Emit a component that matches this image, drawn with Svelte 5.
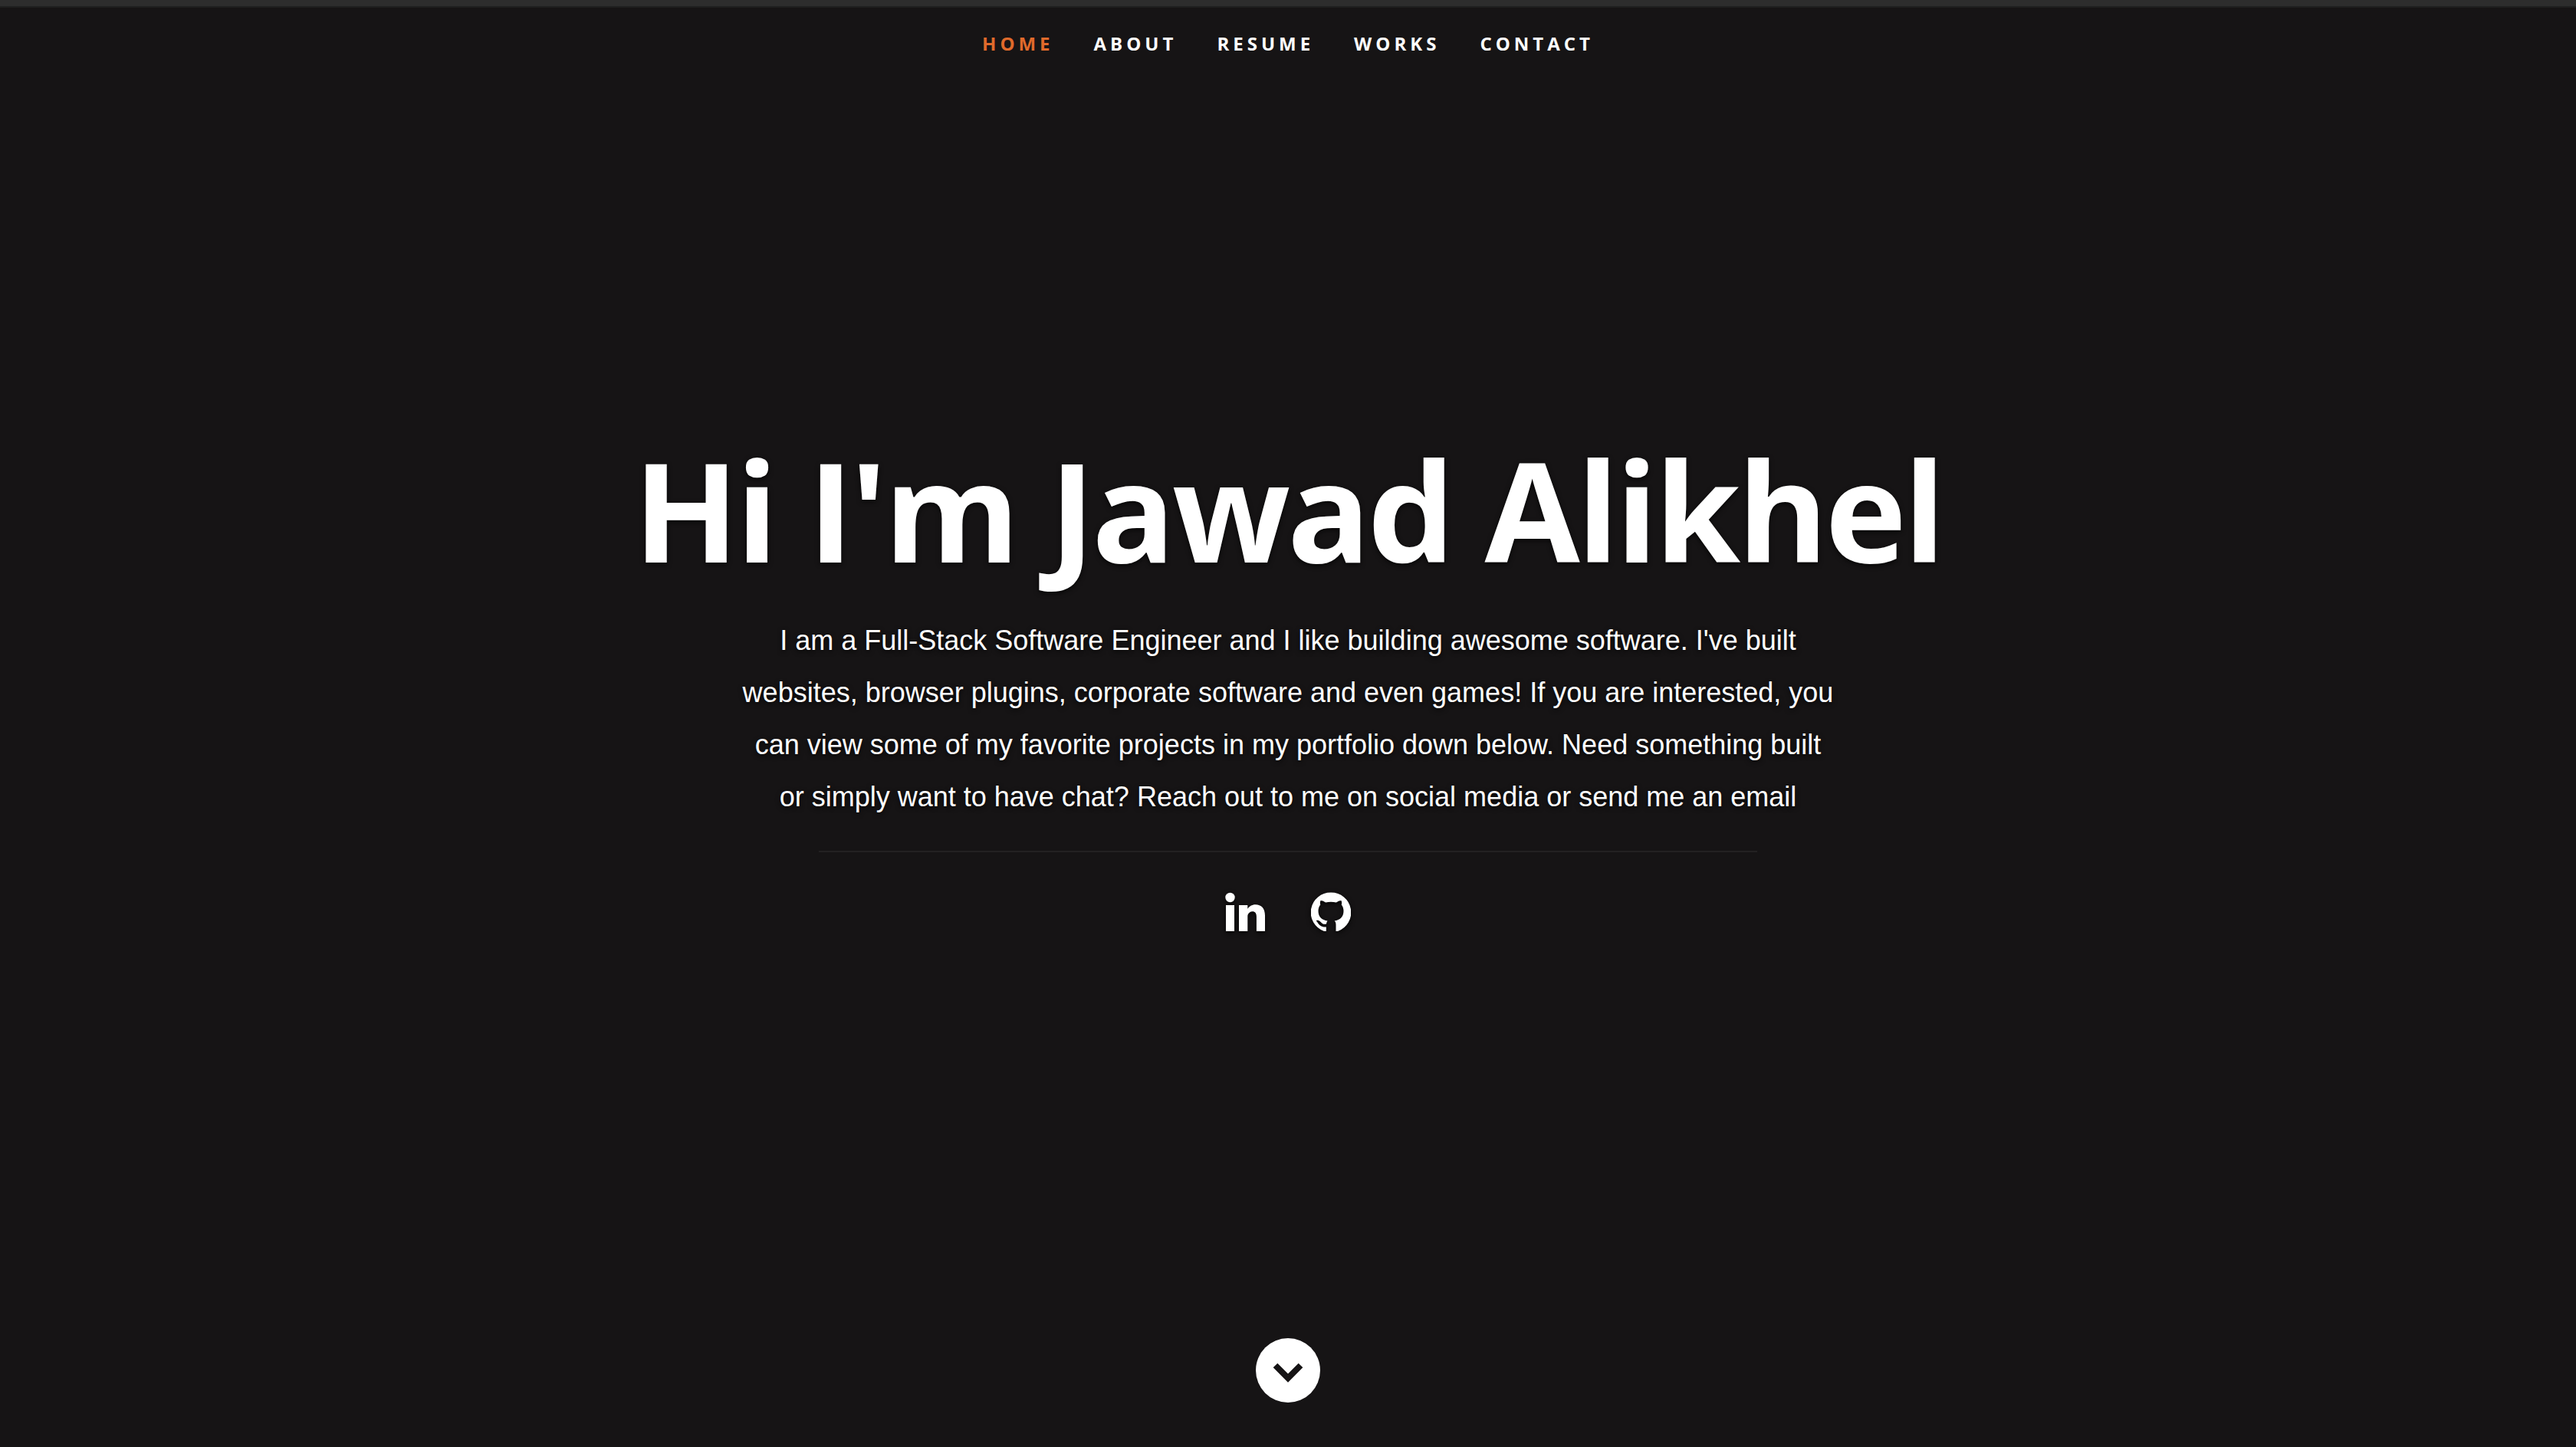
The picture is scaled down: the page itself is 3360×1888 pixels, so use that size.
<script>
  const links = ['Home', 'About', 'Resume', 'Works', 'Contact'];
  let current = $state('Home');
</script>

<header id="home">
  <nav aria-label="Main">
    <ul>
      {#each links as link}
        <li>
          <a href={'#' + link.toLowerCase()} class:current={current === link} onclick={() => (current = link)}>{link}</a>
        </li>
      {/each}
    </ul>
  </nav>

  <main class="banner">
    <h1>Hi I'm Jawad Alikhel</h1>
    <p>
      I am a Full-Stack Software Engineer and I like building awesome software. I've built
      websites, browser plugins, corporate software and even games! If you are interested, you
      can view some of my favorite projects in my portfolio down below. Need something built
      or simply want to have chat? Reach out to me on social media or send me an email
    </p>
    <hr />
    <ul class="social">
      <li>
        <a href="#linkedin" aria-label="LinkedIn">
          <svg viewBox="0 0 52 52">
            <circle cx="6.5" cy="7" r="6.2" />
            <path d="M1 17H12V51H1Z" />
            <path d="M18 17H29.300V21.800C31.500 18.500 34.800 16.200 39.600 16.200C47 16.200 52 21 52 30.500V51H40.900V32C40.900 27.800 39.200 25.300 35.600 25.300C32.800 25.300 30.700 27 29.700 29.300C29.400 30 29.300 31 29.300 32V51H18Z" />
          </svg>
        </a>
      </li>
      <li>
        <a href="#github" aria-label="GitHub">
          <svg viewBox="0 0 52 52">
            <path d="M26 0.500A26 26 0 0 0 17 51H19.800V45.500C13.500 46 10.500 42.800 9 40.200C8 38.500 6.800 38 7 37C8.800 36 11.500 37.200 13.200 39.500C15 41.800 17.500 42.200 20 41.400C20.200 39.800 20.700 38.500 21.500 37.600C14 36.200 9.500 32.500 9.500 24.500C9.500 21 10.600 18.300 12.300 16.400C11.600 14.500 11.800 12.500 12.600 11C15 11 17.300 12.300 19.200 13.600C23.400 12.600 28.600 12.600 32.800 13.600C34.700 12.300 37 11 39.400 11C40.200 12.500 40.400 14.500 39.700 16.400C41.400 18.300 42.500 21 42.500 24.500C42.500 32.500 38 36.200 30.700 37.600C31.900 38.800 32.500 40.300 32.500 42.500V51H35A26 26 0 0 0 26 0.500Z" />
          </svg>
        </a>
      </li>
    </ul>
  </main>

  <a class="scroll" href="#about" aria-label="Scroll down">
    <svg viewBox="0 0 84 84">
      <circle cx="42" cy="42" r="42" />
      <path class="chevron" d="M25.500 35.500L42 52L58.500 35.500" />
    </svg>
  </a>
</header>

<style>
  :global(body) {
    margin: 0;
    background: #161415;
  }
  header {
    box-sizing: border-box;
    min-height: 100vh;
    display: flex;
    flex-direction: column;
    align-items: center;
    border-top: 8px solid #2d2d2d;
    padding-bottom: 58px;
    background: #161415;
    color: #fff;
    font-family: "Liberation Sans", Arial, sans-serif;
  }
  nav {
    width: 100%;
    border-top: 2px solid #1f1f1f;
  }
  ul {
    margin: 0;
    padding: 0;
    list-style: none;
    display: flex;
    justify-content: center;
  }
  a {
    color: inherit;
    text-decoration: none;
  }
  nav a {
    display: block;
    padding: 24px 26px;
    font: 700 24px/46px "Open Sans", sans-serif;
    letter-spacing: 5px;
    text-transform: uppercase;
  }
  nav a.current {
    color: #e06a2b;
  }
  .banner {
    box-sizing: border-box;
    width: 100%;
    max-width: 2040px;
    margin: auto 0;
    padding-bottom: 68px;
    text-align: center;
    text-shadow: 0 2px 6px rgba(0, 0, 0, 0.8);
  }
  h1 {
    margin: 0 0 38px;
    font: 700 180px/198px "Open Sans", sans-serif;
    letter-spacing: -4px;
  }
  p {
    width: 70%;
    margin: 0 auto;
    font-size: 36px;
    line-height: 68px;
  }
  hr {
    width: 60%;
    margin: 36px auto 52px;
    border: 0;
    border-top: 2px solid #232122;
  }
  .social {
    gap: 60px;
  }
  .social a,
  .scroll {
    display: block;
  }
  svg {
    display: block;
    fill: #fff;
  }
  .social svg {
    width: 52px;
    height: 52px;
    filter: drop-shadow(0 2px 3px rgba(0, 0, 0, 0.8));
  }
  .scroll svg {
    width: 84px;
    height: 84px;
  }
  .chevron {
    fill: none;
    stroke: #161415;
    stroke-width: 8;
  }
</style>
